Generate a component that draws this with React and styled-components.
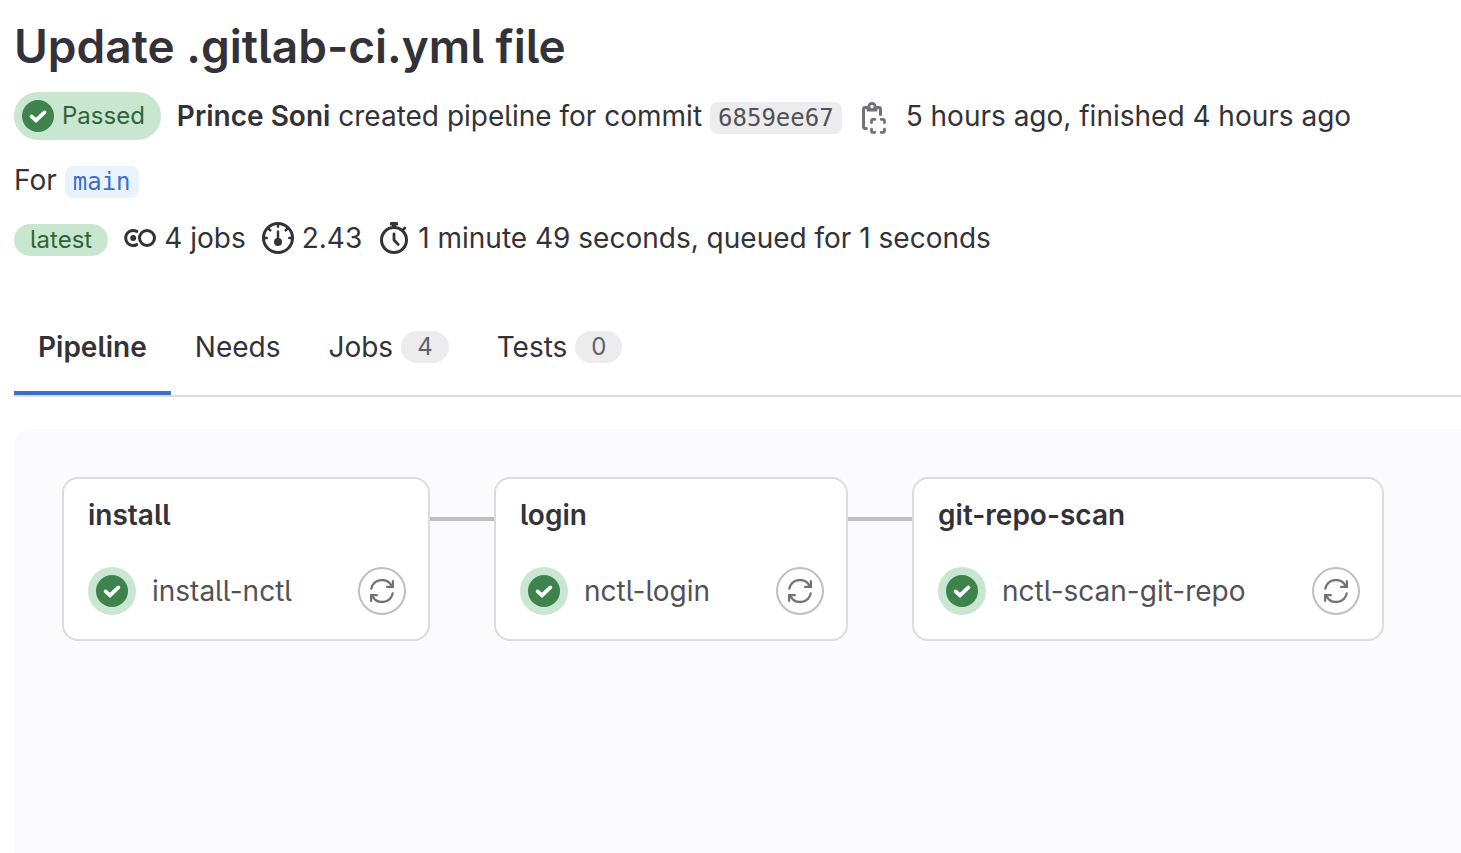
import React from 'react';
import styled, { createGlobalStyle, css } from 'styled-components';

const color = {
  text: '#333238',
  subtle: '#535158',
  icon: '#737278',
  border: '#dcdcde',
  link: '#bfbfc3',
  neutral: '#ececef',
  panel: '#fbfbfd',
  greenSoft: '#c9e6d0',
  green: '#3e824c',
  greenText: '#2f6438',
  blue: '#3a70c8',
  blueSoft: '#eaf3fc',
};

const GlobalStyle = createGlobalStyle`
  *, *::before, *::after { box-sizing: border-box; }
  body {
    margin: 0;
    background: #fff;
    color: ${color.text};
    font-family: Inter, "Liberation Sans", sans-serif;
    font-feature-settings: "cv05";
    font-size: 28px;
    line-height: 40px;
  }
  a { color: inherit; text-decoration: none; }
  button {
    margin: 0;
    padding: 0;
    border: 0;
    background: none;
    color: inherit;
    font: inherit;
    font-feature-settings: inherit;
    cursor: pointer;
  }
`;

const Page = styled.main`
  display: flex;
  flex-direction: column;
  min-height: 100vh;
  padding: 16px 0 0 14px;
`;

const Title = styled.h1`
  margin: 0 0 16px;
  font-size: 46px;
  line-height: 60px;
  font-weight: 600;
`;

const Row = styled.div`
  display: flex;
  align-items: center;
  white-space: nowrap;
  min-height: ${(p) => p.$height || 40}px;
  gap: ${(p) => p.$gap}px;
  margin-bottom: ${(p) => p.$after || 0}px;
`;

const Pill = styled.span`
  display: inline-flex;
  align-items: center;
  gap: 8px;
  height: 32px;
  padding: 0 16px;
  border-radius: 24px;
  font-size: 24px;
  line-height: 32px;
  background: ${color.greenSoft};
  color: ${color.greenText};
  ${(p) => p.$neutral && css`
    background: ${color.neutral};
    color: #626168;
  `}
`;

const Tag = styled(Pill)`
  margin-top: 4px;
`;

const StatusLink = styled(Pill).attrs({ as: 'a' })`
  height: 48px;
  padding: 0 16px 0 8px;
`;

const Author = styled.a`
  font-weight: 600;
`;

const Code = styled.a`
  margin-top: 4px;
  padding: 0 8px;
  border-radius: 8px;
  font-family: "DejaVu Sans Mono", "Liberation Mono", monospace;
  font-size: 24px;
  line-height: 32px;
  background: ${(p) => (p.$branch ? color.blueSoft : color.neutral)};
  color: ${(p) => (p.$branch ? color.blue : color.subtle)};
`;

const IconButton = styled.button`
  display: flex;
  margin-top: 4px;
  padding: 0 8px;
  color: ${color.icon};
`;

const Stat = styled.span`
  display: inline-flex;
  align-items: center;
  gap: 8px;
`;

const Tabs = styled.div`
  display: flex;
  margin-bottom: 32px;
  border-bottom: 2px solid ${color.border};
`;

const Tab = styled.button`
  display: flex;
  align-items: center;
  gap: 8px;
  height: 96px;
  padding: 4px 24px 0;
  border-bottom: 4px solid transparent;
  ${(p) => p.$active && css`
    border-color: ${color.blue};
    font-weight: 600;
  `}
`;

const Graph = styled.section`
  display: flex;
  flex: 1;
  align-items: flex-start;
  padding: 48px;
  border-radius: 16px 0 0 0;
  background: ${color.panel};
`;

const Stage = styled.article`
  padding: 16px 22px 24px 24px;
  border: 2px solid ${color.border};
  border-radius: 16px;
  background: #fff;
`;

const StageName = styled.h2`
  margin: 0 0 32px;
  font-size: 28px;
  line-height: 40px;
  font-weight: 600;
`;

const Connector = styled.div`
  flex: 0 0 64px;
  height: 4px;
  margin-top: 40px;
  background: ${color.link};
`;

const Job = styled.div`
  display: flex;
  align-items: center;
`;

const StatusRing = styled.span`
  display: flex;
  padding: 8px;
  border-radius: 50%;
  background: ${color.greenSoft};
`;

const JobName = styled.a`
  margin: 0 66px 0 16px;
  white-space: nowrap;
  color: ${color.subtle};
`;

const RetryButton = styled.button`
  display: flex;
  align-items: center;
  justify-content: center;
  width: 48px;
  height: 48px;
  border: 2px solid ${color.link};
  border-radius: 50%;
  color: ${color.icon};
`;

const Svg = ({ size = 32, children }) => (
  <svg
    width={size}
    height={size}
    viewBox="0 0 16 16"
    fill="none"
    stroke="currentColor"
    strokeWidth="1.5"
    strokeLinecap="round"
    strokeLinejoin="round"
    aria-hidden="true"
  >
    {children}
  </svg>
);

const CheckIcon = ({ size }) => (
  <Svg size={size}>
    <circle cx="8" cy="8" r="8" fill={color.green} stroke="none" />
    <path d="M4.8 8.2 7 10.2l4.2-4" stroke="#fff" strokeWidth="1.9" strokeLinejoin="miter" />
  </Svg>
);

const ClipboardIcon = () => (
  <Svg>
    <path d="M4.2 13.25H3.5a.75.75 0 0 1-.75-.75V3.5a.75.75 0 0 1 .75-.75h7a.75.75 0 0 1 .75.75v2.7" />
    <path
      d="M7 0a2.2 2.2 0 0 1 2.15 2h.05a.5.5 0 0 1 .5.5v1.7a.5.5 0 0 1-.5.5H4.8a.5.5 0 0 1-.5-.5V2.5a.5.5 0 0 1 .5-.5h.05A2.2 2.2 0 0 1 7 0Z"
      fill="currentColor"
      stroke="none"
    />
    <circle cx="7" cy="2.3" r=".9" fill="#fff" stroke="none" />
    <path
      d="M6.75 10.4v-.9a.75.75 0 0 1 .75-.75h.9M11.6 8.75h.9a.75.75 0 0 1 .75.75v.9M13.25 13.6v.9a.75.75 0 0 1-.75.75h-.9M8.4 15.25h-.9a.75.75 0 0 1-.75-.75v-.9"
      strokeWidth="1.4"
      transform="translate(0 -.05)"
    />
  </Svg>
);

const JobsIcon = () => (
  <Svg>
    <path d="M6.4 4.7a3.75 3.75 0 1 0 0 6.6" />
    <circle cx="4.6" cy="8" r="1.5" fill="currentColor" stroke="none" />
    <circle cx="11.5" cy="8" r="3.75" />
  </Svg>
);

const GaugeIcon = () => (
  <Svg>
    <circle cx="8" cy="8" r="7.25" />
    <path d="M8 1.2v1.2M1.2 8h1.2M14.8 8h-1.2M3.4 3.4l.8.8M12.6 3.4l-.8.8" strokeWidth="1.2" />
    <path d="M8 4.7V9" strokeWidth="1.2" />
    <circle cx="8" cy="10" r="2" fill="currentColor" stroke="none" />
  </Svg>
);

const TimerIcon = () => (
  <Svg>
    <circle cx="8" cy="9" r="6.25" />
    <path d="M8 6v3l2.1 2.2" strokeWidth="1.4" />
    <path d="M6.6 0h2.8a.6.6 0 0 1 .6.6v.6a.6.6 0 0 1-.6.6H9V3H7V1.8h-.4a.6.6 0 0 1-.6-.6V.6a.6.6 0 0 1 .6-.6Z" fill="currentColor" stroke="none" />
    <path d="M12.5 3.9l.9-.9" strokeWidth="1.3" />
  </Svg>
);

const RetryIcon = () => (
  <Svg size={24}>
    <path d="M.9 6.4a7.25 7.25 0 0 1 13.4-2M15.1 9.6a7.25 7.25 0 0 1-13.4 2" />
    <path d="M15.25 1.4v3.9h-3.9M.75 14.6v-3.9h3.9" strokeLinejoin="miter" />
  </Svg>
);

const tabs = [
  { name: 'Pipeline', active: true },
  { name: 'Needs' },
  { name: 'Jobs', count: 4 },
  { name: 'Tests', count: 0 },
];

const stages = [
  { name: 'install', job: 'install-nctl' },
  { name: 'login', job: 'nctl-login' },
  { name: 'git-repo-scan', job: 'nctl-scan-git-repo' },
];

export default function App() {
  return (
    <>
      <GlobalStyle />
      <Page>
        <Title>Update .gitlab-ci.yml file</Title>
        <Row $height={48} $gap={16} $after={20}>
          <StatusLink href="#status">
            <CheckIcon size={32} />
            Passed
          </StatusLink>
          <Row $gap={8}>
            <span>
              <Author href="#author">Prince Soni</Author> created pipeline for commit
            </span>
            <Code href="#commit">6859ee67</Code>
            <IconButton type="button" aria-label="Copy commit SHA">
              <ClipboardIcon />
            </IconButton>
            <span>5 hours ago, finished 4 hours ago</span>
          </Row>
        </Row>
        <Row $gap={8} $after={18}>
          For <Code href="#branch" $branch>main</Code>
        </Row>
        <Row $gap={16} $after={41}>
          <Tag>latest</Tag>
          <Stat><JobsIcon />4 jobs</Stat>
          <Stat><GaugeIcon />2.43</Stat>
          <Stat><TimerIcon />1 minute 49 seconds, queued for 1 seconds</Stat>
        </Row>
        <Tabs role="tablist">
          {tabs.map((t) => (
            <Tab key={t.name} type="button" role="tab" aria-selected={!!t.active} $active={t.active}>
              {t.name}
              {t.count !== undefined && <Pill $neutral>{t.count}</Pill>}
            </Tab>
          ))}
        </Tabs>
        <Graph>
          {stages.map((s, i) => (
            <React.Fragment key={s.name}>
              {i > 0 && <Connector />}
              <Stage>
                <StageName>{s.name}</StageName>
                <Job>
                  <StatusRing><CheckIcon size={32} /></StatusRing>
                  <JobName href={`#${s.job}`}>{s.job}</JobName>
                  <RetryButton type="button" aria-label={`Retry ${s.job}`}>
                    <RetryIcon />
                  </RetryButton>
                </Job>
              </Stage>
            </React.Fragment>
          ))}
        </Graph>
      </Page>
    </>
  );
}
